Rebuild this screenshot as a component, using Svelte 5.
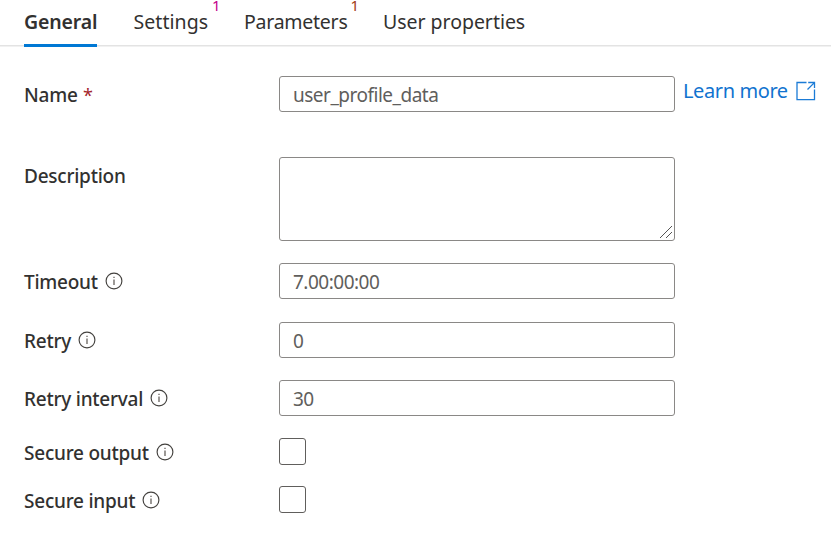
<script>
  const tabs = [
    { label: 'General', width: 73, spacing: -0.15, active: true },
    { label: 'Settings', width: 75, spacing: 0.06, badge: '1', tone: 'pink' },
    { label: 'Parameters', width: 103, spacing: -0.25, badge: '1', tone: 'brown' },
    { label: 'User properties', width: 141, spacing: -0.03 }
  ];
  const rows = [
    { label: 'Name', width: 53, kind: 'text', value: 'user_profile_data', height: 36, gap: 45, required: true, link: true },
    { label: 'Description', width: 101, kind: 'area', height: 84, gap: 22 },
    { label: 'Timeout', width: 74, kind: 'text', value: '7.00:00:00', height: 36, gap: 23, info: true },
    { label: 'Retry', width: 47, kind: 'text', value: '0', height: 36, gap: 22, info: true },
    { label: 'Retry interval', width: 119, kind: 'text', value: '30', height: 36, gap: 22, info: true },
    { label: 'Secure output', width: 125, kind: 'check', height: 27, gap: 21, info: true },
    { label: 'Secure input', width: 111, kind: 'check', height: 27, gap: 0, info: true }
  ];
</script>

<div class="panel">
  <nav class="tabs">
    {#each tabs as tab}
      <div class="tab" class:active={tab.active} style:width="{tab.width}px">
        <span style:letter-spacing="{tab.spacing}px">{tab.label}</span>
        {#if tab.badge}<sup class={tab.tone}>{tab.badge}</sup>{/if}
      </div>
    {/each}
  </nav>
  <form class="form">
    {#each rows as row}
      <div class="row" style:height="{row.height}px" style:margin-bottom="{row.gap}px">
        <div class="label" class:check-label={row.kind === 'check'}>
          <span class="name" style:width="{row.width}px">{row.label}</span>
          {#if row.required}<span class="star">*</span>{/if}
          {#if row.info}
            <svg class="info" width="18" height="18" viewBox="0 0 18 18">
              <circle cx="9" cy="9" r="7.9" fill="none" stroke="#44423f" stroke-width="1.15" />
              <path d="M9 7.5V13M9 4.7V6.1" stroke="#5a5550" stroke-width="1.2" />
            </svg>
          {/if}
        </div>
        {#if row.kind === 'text'}
          <div class="field">{row.value}</div>
        {:else if row.kind === 'area'}
          <div class="field area">
            <svg width="12" height="12" viewBox="0 0 12 12"><path d="M0 12L12 0M6 12L12 6" stroke="#555" fill="none" /></svg>
          </div>
        {:else}
          <div class="box"></div>
        {/if}
        {#if row.link}
          <a class="learn" href="#learn"><span>Learn more</span>
            <svg width="20" height="20" viewBox="0 0 20 20" fill="none" stroke="#1b7bd6" stroke-width="1.3">
              <path d="M10.5 1.5H1V18.7H18.5V8.5M12.2 1.5H18.5V7M18.4 1.6L11.5 8.5" />
            </svg>
          </a>
        {/if}
      </div>
    {/each}
  </form>
</div>

<style>
  :global(body) { background: #fff; }
  .panel { width: 831px; height: 540px; overflow: hidden; font-family: "Noto Sans", sans-serif; color: #323130; }
  .tabs { display: flex; box-sizing: border-box; height: 47px; padding-left: 24px; gap: 36px; background: linear-gradient(#e3e3e3, #e3e3e3) 0 45px / 100% 1.5px no-repeat; }
  .tab { position: relative; box-sizing: border-box; height: 47px; line-height: 43px; font-size: 19.5px; white-space: nowrap; }
  .tab:nth-child(2) { left: 0.5px; }
  .tab.active { font-weight: 600; border-bottom: 3px solid #0078d4; }
  sup { position: absolute; right: -12px; top: 0; font-size: 15px; line-height: 11px; }
  .pink { color: #c3008b; }
  .brown { color: #a33b16; }
  .form { padding: 29px 0 0 24px; }
  .row { display: flex; align-items: flex-start; }
  .label { display: flex; width: 255px; height: 36px; line-height: 38px; font-size: 19px; font-weight: 500; letter-spacing: -0.24px; white-space: nowrap; }
  .check-label { height: 27px; line-height: 30px; }
  .star { margin-left: 6px; font-weight: 400; font-size: 18px; color: #a4262c; }
  .info { margin: 9px 0 0 7px; }
  .check-label .info { margin-top: 5px; }
  .field { box-sizing: border-box; width: 396px; height: 100%; padding-left: 13px; border: 1px solid #8a8886; border-radius: 3px; line-height: 36px; font-size: 19px; letter-spacing: -0.5px; color: #605e5c; }
  .area { display: flex; justify-content: flex-end; align-items: flex-end; padding: 0 2px 2px 0; }
  .box { box-sizing: border-box; width: 27px; height: 27px; border: 1px solid #605e5c; border-radius: 3px; }
  .learn { display: flex; margin-left: 8px; font-size: 20px; line-height: 29px; letter-spacing: -0.4px; color: #1173cf; text-decoration: none; white-space: nowrap; }
  .learn span { width: 105px; }
  .learn svg { margin: 5px 0 0 8px; }
</style>
